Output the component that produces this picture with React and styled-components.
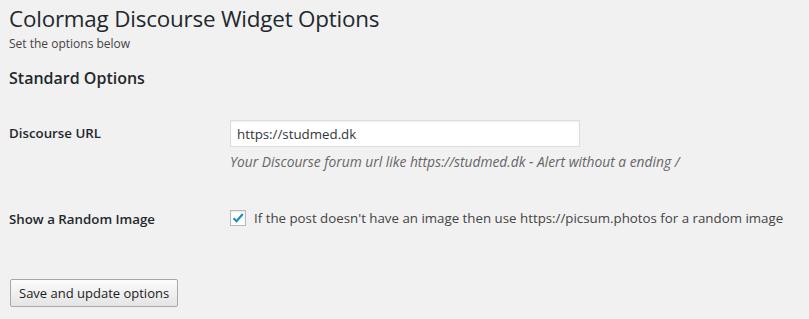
import React, { useState } from 'react';
import styled, { createGlobalStyle } from 'styled-components';

const GlobalStyle = createGlobalStyle`
  html, body {
    margin: 0;
    padding: 0;
    background: #f1f1f1;
  }
  body {
    font-family: "Open Sans", "Noto Sans", sans-serif;
    color: #23282d;
    font-size: 13px;
  }
`;

const Wrap = styled.div`
  padding: 4px 9px 0;
`;

const Title = styled.h1`
  font-size: 22.4px;
  font-weight: 400;
  line-height: 29px;
  margin: 0;
  color: #23282d;
  letter-spacing: -0.2px;
`;

const Sub = styled.p`
  margin: 2px 0 0;
  font-size: 12px;
  line-height: 18px;
  color: #444;
`;

const Section = styled.h2`
  font-size: 16px;
  font-weight: 600;
  margin: 14px 0 0;
  line-height: 22px;
  color: #23282d;
`;

const Form = styled.div`
  margin-top: 31px;
  display: flex;
  flex-direction: column;
`;

const Row = styled.div`
  display: grid;
  grid-template-columns: 220px 1fr;
  padding: ${(p) => p.$pad || '0'};
`;

const Label = styled.div`
  font-weight: 600;
  font-size: 13.3px;
  line-height: 20px;
  padding-top: ${(p) => p.$top || '0'};
  color: #23282d;
`;

const Field = styled.div`
  display: flex;
  flex-direction: column;
  padding-left: 1px;
`;

const Input = styled.input`
  box-sizing: border-box;
  width: 350px;
  height: 27px;
  border: 1px solid #ddd;
  box-shadow: inset 0 1px 2px rgba(0, 0, 0, 0.07);
  background: #fff;
  font-family: inherit;
  font-size: 13.3px;
  color: #32373c;
  padding: 2px 6px;
  outline: none;
`;

const Desc = styled.p`
  margin: 5px 0 0;
  font-style: italic;
  font-size: 13.8px;
  line-height: 20px;
  color: #666;
`;

const CheckLine = styled.label`
  display: flex;
  align-items: center;
  gap: 8px;
  font-size: 13.3px;
  color: #444;
  cursor: pointer;
`;

const Box = styled.span`
  box-sizing: border-box;
  width: 16px;
  height: 16px;
  border: 1px solid #b4b9be;
  background: #fff;
  box-shadow: inset 0 1px 2px rgba(0, 0, 0, 0.1);
  display: flex;
  align-items: center;
  justify-content: center;
  flex: none;
`;

const Button = styled.button`
  margin-top: 50px;
  margin-left: 1px;
  height: 28px;
  padding: 0 8px;
  border: 1px solid #a8a8a8;
  border-radius: 2px;
  background: linear-gradient(#fcfcfc, #e4e4e4);
  font-family: inherit;
  font-size: 13px;
  color: #1c1c1c;
  cursor: pointer;
  align-self: flex-start;
`;

export default function App() {
  const [url, setUrl] = useState('https://studmed.dk');
  const [random, setRandom] = useState(true);

  return (
    <Wrap>
      <GlobalStyle />
      <Title>Colormag Discourse Widget Options</Title>
      <Sub>Set the options below</Sub>
      <Section>Standard Options</Section>
      <Form>
        <Row>
          <Label $top="3px">Discourse URL</Label>
          <Field>
            <Input value={url} onChange={(e) => setUrl(e.target.value)} />
            <Desc>Your Discourse forum url like https://studmed.dk - Alert without a ending /</Desc>
          </Field>
        </Row>
        <Row $pad="37px 0 0">
          <Label>Show a Random Image</Label>
          <Field>
            <CheckLine onClick={() => setRandom(!random)}>
              <Box>
                {random ? (
                  <svg width="14" height="14" viewBox="0 0 14 14">
                    <path d="M2.5 7.2 L5.6 10.2 L11.8 3" fill="none" stroke="#1e8cbe" strokeWidth="2.2" />
                  </svg>
                ) : null}
              </Box>
              If the post doesn't have an image then use https://picsum.photos for a random image
            </CheckLine>
          </Field>
        </Row>
        <Button>Save and update options</Button>
      </Form>
    </Wrap>
  );
}
